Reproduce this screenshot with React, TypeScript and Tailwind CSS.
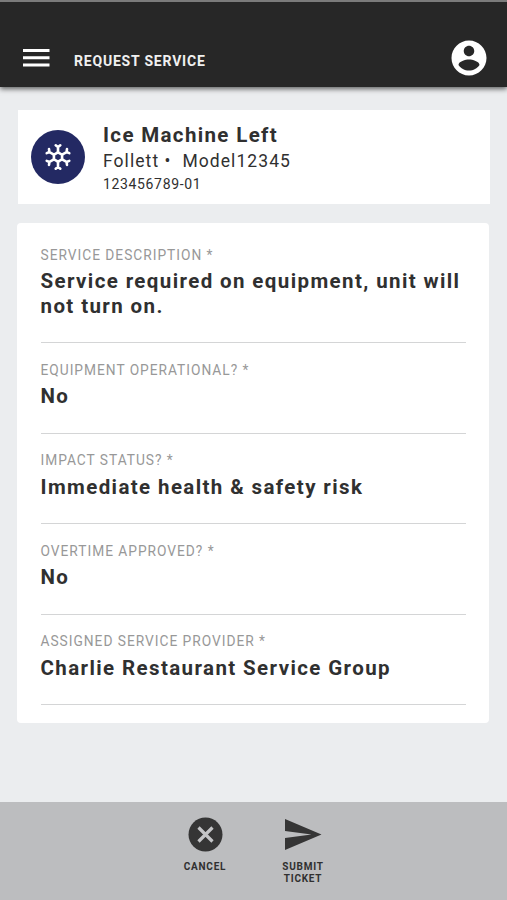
import React from "react";

interface FieldProps {
  label: string;
  value: string;
}

const fields: FieldProps[] = [
  { label: "SERVICE DESCRIPTION *", value: "Service required on equipment, unit will not turn on." },
  { label: "EQUIPMENT OPERATIONAL? *", value: "No" },
  { label: "IMPACT STATUS? *", value: "Immediate health & safety risk" },
  { label: "OVERTIME APPROVED? *", value: "No" },
  { label: "ASSIGNED SERVICE PROVIDER *", value: "Charlie Restaurant Service Group" },
];

function Field({ label, value }: FieldProps) {
  return (
    <div className="border-b border-[#d4d5d6] pt-[18.5px] pb-6">
      <div className="mb-[6.5px] text-[13.75px] leading-4 tracking-[0.98px] text-[#989898]">{label}</div>
      <div className="text-[20.5px] leading-[24.5px] font-bold tracking-[1.39px] text-[#303030]">{value}</div>
    </div>
  );
}

function Snowflake() {
  return (
    <svg width="28" height="28" viewBox="-14 -14 28 28" fill="none" stroke="#fff" strokeWidth="2.6" strokeLinecap="round">
      <path d="M0-4.7 4.07-2.35V2.35L0 4.7-4.07 2.35V-2.35Z" />
      {[0, 60, 120, 180, 240, 300].map((a) => (
        <path key={a} transform={`rotate(${a})`} d="M0-4.7V-9.9M-2.3-11.700 0-9.900 2.300-11.700" />
      ))}
    </svg>
  );
}

export default function App() {
  return (
    <div className="flex h-[900px] w-[507px] flex-col overflow-hidden bg-[#ebedef] font-['Roboto','Liberation_Sans',sans-serif]">
      <header className="flex h-[87px] shrink-0 items-start border-t-2 border-[#7b7b7b] bg-[#272727] pl-[23px] shadow-[0_2px_5px_rgba(0,0,0,0.6)]">
        <svg className="mt-[46px]" width="27" height="20" viewBox="0 0 27 20" fill="#fff">
          <path d="M0 1h26.5v3H0zM0 8.200h26.500v3H0zM0 15.400h26.500v3H0z" />
        </svg>
        <h1 className="mt-[51px] ml-6 text-[14px] leading-4 font-bold tracking-[0.8px] text-[#f0f0f0]">REQUEST SERVICE</h1>
        <svg className="mt-[35px] mr-[17px] ml-auto" width="42" height="42" viewBox="0 0 24 24" fill="#fff">
          <path d="M12 2C6.480 2 2 6.480 2 12s4.480 10 10 10 10-4.480 10-10S17.520 2 12 2zm0 3c1.660 0 3 1.340 3 3s-1.340 3-3 3-3-1.340-3-3 1.340-3 3-3zm0 14.200c-2.500 0-4.710-1.280-6-3.220.030-1.990 4-3.080 6-3.080 1.990 0 5.970 1.090 6 3.080-1.290 1.940-3.500 3.220-6 3.220z" />
        </svg>
      </header>

      <section className="mt-[23px] mr-[17px] ml-[18px] flex h-[94px] shrink-0 bg-white pl-[13px]">
        <div className="mt-[20px] flex size-[54px] items-center justify-center rounded-full bg-[#232963]">
          <Snowflake />
        </div>
        <div className="ml-[18px] pt-[13px] text-[#303030]">
          <h2 className="text-[20.5px] leading-[25px] font-bold tracking-[1.35px]">Ice Machine Left</h2>
          <p className="text-[17.5px] leading-[26px] tracking-[1.07px] whitespace-pre">Follett •  Model12345</p>
          <p className="text-[14px] leading-[21px] tracking-[0.65px]">123456789-01</p>
        </div>
      </section>

      <section className="mt-[19px] mr-[18px] ml-[17px] h-[500px] shrink-0 rounded-[4px] bg-white px-[23.5px] pt-[5px]">
        {fields.map((f) => (
          <Field key={f.label} {...f} />
        ))}
      </section>

      <footer className="mt-auto flex h-[98px] shrink-0 bg-[#bcbdbf] pl-[156px] text-center text-[10px] leading-3 font-bold text-[#303030]">
        <button className="flex w-[98px] flex-col items-center pt-[15px]">
          <svg width="35" height="35" viewBox="0 0 35 35">
            <circle cx="17.500" cy="17.500" r="17" fill="#353535" />
            <path d="M10.500 10.500l14 14M24.500 10.500l-14 14" stroke="#c4c5c7" strokeWidth="3.200" />
          </svg>
          <span className="mt-[9px] tracking-[0.750px]">CANCEL</span>
        </button>
        <button className="flex w-[98px] flex-col items-center pt-[15px]">
          <svg width="37" height="35" viewBox="0 0 37 35" fill="#353535">
            <path d="M0 2 36.500 17.500 0 33V21L26.500 17.500 0 14Z" />
          </svg>
          <span className="mt-[9px] tracking-[0.750px]">SUBMIT<br />TICKET</span>
        </button>
      </footer>
    </div>
  );
}
